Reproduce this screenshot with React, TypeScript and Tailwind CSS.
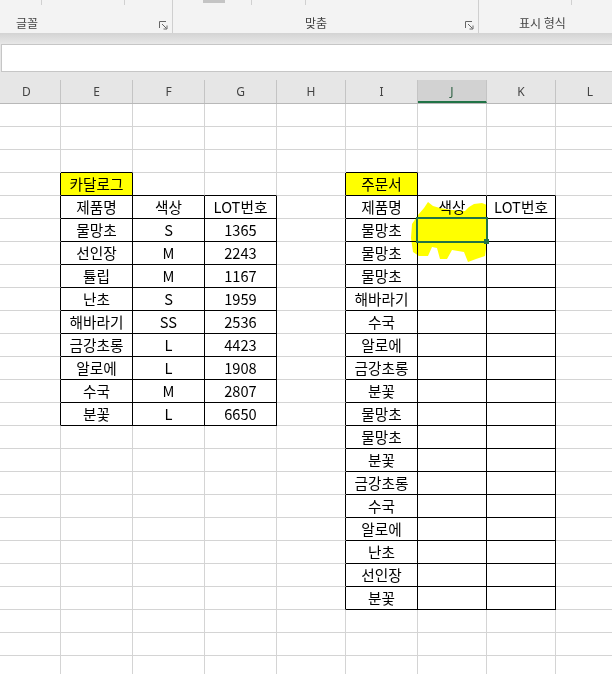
import React from 'react';

type Cell = { text?: string; yellow?: boolean; r?: boolean; b?: boolean };

const COLS = [
  { label: 'D', cls: 'w-[68px] ml-[-7px]' },
  { label: 'E', cls: 'w-[72px]' },
  { label: 'F', cls: 'w-[72px]' },
  { label: 'G', cls: 'w-[72px]' },
  { label: 'H', cls: 'w-[69px]' },
  { label: 'I', cls: 'w-[72px]' },
  { label: 'J', cls: 'w-[69px]' },
  { label: 'K', cls: 'w-[69px]' },
  { label: 'L', cls: 'w-[69px]' },
];

const CATALOG = [
  ['물망초', 'S', '1365'],
  ['선인장', 'M', '2243'],
  ['튤립', 'M', '1167'],
  ['난초', 'S', '1959'],
  ['해바라기', 'SS', '2536'],
  ['금강초롱', 'L', '4423'],
  ['알로에', 'L', '1908'],
  ['수국', 'M', '2807'],
  ['분꽃', 'L', '6650'],
];

const ORDERS = [
  '물망초', '물망초', '물망초', '해바라기', '수국', '알로에', '금강초롱', '분꽃', '물망초',
  '물망초', '분꽃', '금강초롱', '수국', '알로에', '난초', '선인장', '분꽃',
];

const ROWS = 25;

function buildGrid(): Cell[][] {
  const g: Cell[][] = Array.from({ length: ROWS }, () => COLS.map(() => ({})));
  // black outline for a block of cells (inclusive); each cell owns its right/bottom line
  const box = (r0: number, r1: number, c0: number, c1: number) => {
    for (let r = r0; r <= r1; r++) {
      for (let c = c0; c <= c1; c++) {
        g[r][c].r = true;
        g[r][c].b = true;
      }
      g[r][c0 - 1].r = true;
    }
    for (let c = c0; c <= c1; c++) g[r0 - 1][c].b = true;
  };
  box(3, 3, 1, 1);
  box(4, 13, 1, 3);
  box(3, 3, 5, 5);
  box(4, 21, 5, 7);

  g[3][1] = { ...g[3][1], text: '카달로그', yellow: true };
  g[3][5] = { ...g[3][5], text: '주문서', yellow: true };
  ['제품명', '색상', 'LOT번호'].forEach((t, i) => {
    g[4][1 + i].text = t;
    g[4][5 + i].text = t;
  });
  CATALOG.forEach((row, i) => row.forEach((t, j) => (g[5 + i][1 + j].text = t)));
  ORDERS.forEach((t, i) => (g[5 + i][5].text = t));
  return g;
}

const GRID = buildGrid();

function Launcher() {
  return (
    <svg width="9" height="9" viewBox="0 0 9 9" className="mt-[16px] shrink-0">
      <path d="M0.5 7V0.5H7" fill="none" stroke="#666" strokeWidth="1" />
      <path d="M3 3L7.5 7.5" fill="none" stroke="#666" strokeWidth="1" />
      <path d="M8 4.5V8H4.5" fill="none" stroke="#666" strokeWidth="1" />
    </svg>
  );
}

function Ribbon() {
  return (
    <div className="flex h-[33px] bg-[#f3f3f3] font-['Noto_Sans_CJK_KR',sans-serif] text-[12px] text-[#444]">
      {/* 글꼴 */}
      <div className="flex w-[173px] shrink-0 flex-col border-r border-r-[#cfcfcf]">
        <div className="flex h-[5px]">
          <div className="w-[42px] border-r border-r-[#d0d0d0]" />
          <div className="w-[83px] border-r border-r-[#d0d0d0]" />
        </div>
        <div className="flex flex-1 items-start justify-between pl-[16px] pr-[4px]">
          <span className="mt-[10px] leading-[16px]">글꼴</span>
          <Launcher />
        </div>
      </div>
      {/* 맞춤 */}
      <div className="flex w-[306px] shrink-0 flex-col border-r border-r-[#cfcfcf]">
        <div className="flex h-[5px]">
          <div className="w-[30px]" />
          <div className="h-[3px] w-[22px] bg-[#c4c4c4]" />
          <div className="w-[27px] border-r border-r-[#d0d0d0]" />
          <div className="w-[54px] border-r border-r-[#d0d0d0]" />
        </div>
        <div className="flex flex-1 items-start justify-between pl-[132px] pr-[4px]">
          <span className="mt-[10px] leading-[16px]">맞춤</span>
          <Launcher />
        </div>
      </div>
      {/* 표시 형식 */}
      <div className="flex flex-1 flex-col">
        <div className="flex h-[5px]">
          <div className="w-[93px] border-r border-r-[#d0d0d0]" />
        </div>
        <div className="flex flex-1 items-start pl-[40px]">
          <span className="mt-[10px] leading-[16px]">표시 형식</span>
        </div>
      </div>
    </div>
  );
}

function ColumnHeaders() {
  return (
    <div className="bg-[#e6e6e6] pt-[8px]">
      <div className="flex h-[24px] overflow-hidden border-b border-b-[#b8b8b8] font-['Noto_Sans',sans-serif] text-[12px]">
        {COLS.map((col) =>
          col.label === 'J' ? (
            <div
              key={col.label}
              className={`${col.cls} shrink-0 flex items-center justify-center border-r border-r-[#c4c4c4] border-b-2 border-b-[#217346] bg-[#d2d2d2] pt-[2px] text-[#2c5f41]`}
            >
              {col.label}
            </div>
          ) : (
            <div
              key={col.label}
              className={`${col.cls} shrink-0 flex items-center justify-center border-r border-r-[#c4c4c4] text-[#444]`}
            >
              {col.label}
            </div>
          ),
        )}
      </div>
    </div>
  );
}

export default function App() {
  return (
    <div className="h-[674px] w-[612px] overflow-hidden bg-white">
      <Ribbon />
      <div className="h-[11px] bg-gradient-to-b from-[#d3d3d3] to-[#e8e8e8]" />
      <div className="bg-[#e6e6e6] pl-[1px]">
        <div className="mr-[-4px] h-[28px] border border-[#c6c6c6] bg-white" />
      </div>
      <ColumnHeaders />

      <div className="relative">
        {GRID.map((row, r) => (
          <div key={r} className="flex h-[23px]">
            {row.map((cell, c) => (
              <div
                key={c}
                className={`${COLS[c].cls} shrink-0 flex items-center justify-center border-r border-b pt-[1px] font-['Noto_Sans_CJK_KR',sans-serif] text-[14.67px] leading-none text-black ${
                  cell.r ? 'border-r-black' : 'border-r-[#d4d4d4]'
                } ${cell.b ? 'border-b-black' : 'border-b-[#d4d4d4]'} ${cell.yellow ? 'bg-[#ffff00]' : 'bg-white'}`}
              >
                {cell.text}
              </div>
            ))}
          </div>
        ))}

        {/* highlighter scribble over J5:J7 */}
        <svg
          className="pointer-events-none absolute left-0 top-0 mix-blend-multiply"
          width="612"
          height="570"
          viewBox="0 104 612 570"
        >
          <polygon
            fill="#ffff00"
            points="412,224 418,215 424,208 428,202 433,206 440,208 452,210 465,211 469,207 474,204 482,203 487,205 487,216 487,242 485,256 476,259 468,262 464,252 452,250 447,259 440,259 437,248 432,247 428,256 419,256 413,252 411,238"
          />
        </svg>

        {/* active cell J6 */}
        <div className="pointer-events-none absolute left-[416px] top-[113px] h-[26px] w-[72px] border-2 border-[#217346]" />
        <div className="pointer-events-none absolute left-[484px] top-[135px] h-[5px] w-[5px] bg-[#217346]" />
      </div>
    </div>
  );
}
